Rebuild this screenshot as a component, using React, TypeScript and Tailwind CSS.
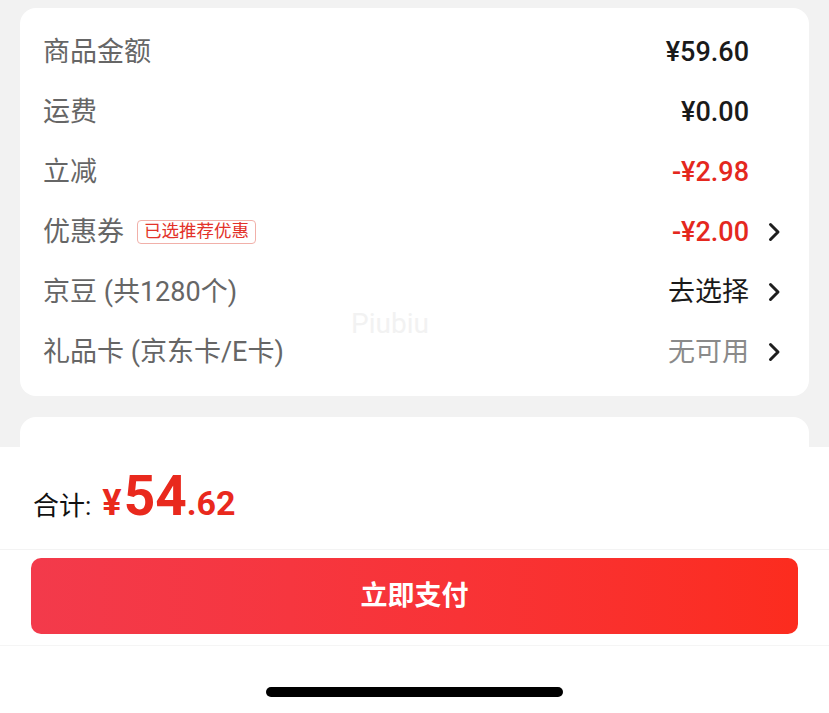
import React from "react";

const Chevron = () => (
  <svg width="14" height="20" viewBox="0 0 14 20" fill="none">
    <polyline points="3.5,2.5 11,10 3.5,17.5" stroke="#1f1f1f" strokeWidth="3" strokeLinecap="round" strokeLinejoin="round" />
  </svg>
);

type Row = {
  label: React.ReactNode;
  value: string;
  valueClass: string;
  chevron?: boolean;
};

const FONT = { fontFamily: 'Roboto, "Noto Sans CJK SC", sans-serif' };

export default function App() {
  const rows: Row[] = [
    { label: "商品金额", value: "¥59.60", valueClass: "font-medium text-[#1a1a1a]" },
    { label: "运费", value: "¥0.00", valueClass: "font-medium text-[#1a1a1a]" },
    { label: "立减", value: "-¥2.98", valueClass: "font-medium text-[#e4281e]" },
    {
      label: (
        <span className="flex items-center">
          <span>优惠券</span>
          <span className="ml-[13px] flex h-[24px] items-center rounded-[4px] border border-[#f1b0a9] px-[6px] text-[17.5px] leading-none text-[#e3322a]">
            已选推荐优惠
          </span>
        </span>
      ),
      value: "-¥2.00",
      valueClass: "font-medium text-[#e4281e]",
      chevron: true,
    },
    { label: "京豆 (共1280个)", value: "去选择", valueClass: "text-[#1a1a1a]", chevron: true },
    { label: "礼品卡 (京东卡/E卡)", value: "无可用", valueClass: "text-[#8a8a8a]", chevron: true },
  ];

  return (
    <div className="flex h-[713px] w-[829px] flex-col overflow-hidden bg-[#f2f2f2]" style={FONT}>
      <div className="flex min-h-0 flex-1 flex-col gap-[21px] overflow-hidden px-[20px] pt-[8px]">
        <div className="relative rounded-[16px] bg-white py-[14px] pl-[23px] pr-[28px]">
          {rows.map((r, i) => (
            <div key={i} className="flex h-[60px] items-center justify-between">
              <div className="text-[27px] leading-none text-[#666666]">{r.label}</div>
              <div className="flex items-center">
                <span className={`text-[27px] leading-none ${r.valueClass}`}>{r.value}</span>
                <span className="flex w-[32px] justify-end">{r.chevron ? <Chevron /> : null}</span>
              </div>
            </div>
          ))}
          <div className="pointer-events-none absolute left-[331px] top-[302px] text-[28px] leading-none text-[#f2f2f2]">
            Piubiu
          </div>
        </div>
        <div className="h-[120px] shrink-0 rounded-[16px] bg-white" />
      </div>

      <div className="flex h-[266px] shrink-0 flex-col bg-white">
        <div className="flex h-[102px] items-center pb-[4px] pl-[33px]">
          <div className="flex items-baseline">
            <span className="text-[26px] leading-none text-[#111111]">合计:</span>
            <span className="ml-[11px] text-[36px] font-bold leading-none text-[#e9291d]">¥</span>
            <span className="ml-[2px] text-[55px] font-bold leading-none text-[#e9291d]">54</span>
            <span className="text-[34px] font-bold leading-none text-[#e9291d]">.62</span>
          </div>
        </div>
        <div className="h-px bg-[#f3f3f3]" />
        <div className="px-[31px] pb-[11px] pt-[8px]">
          <div className="flex h-[76px] items-center justify-center rounded-[10px] bg-gradient-to-r from-[#f33a4b] to-[#fc2c1e] text-[27px] font-bold leading-none text-white">
            立即支付
          </div>
        </div>
        <div className="h-px bg-[#f5f5f5]" />
        <div className="flex justify-center pt-[41px]">
          <div className="h-[10px] w-[297px] rounded-full bg-black" />
        </div>
      </div>
    </div>
  );
}
